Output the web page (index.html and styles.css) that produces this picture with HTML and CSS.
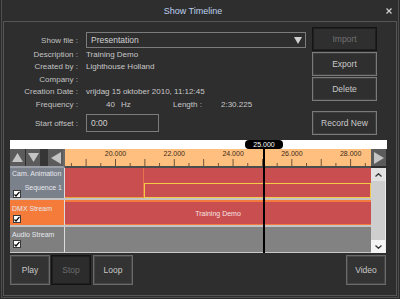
FILE: index.html
```html
<!DOCTYPE html>
<html lang="en">
<head>
    <meta charset="UTF-8">
    <meta name="viewport" content="width=device-width, initial-scale=1.0">
    <title>Show Timeline</title>
    <link rel="stylesheet" href="styles.css">
</head>
<body>
    <div class="window">
        <!-- Title bar -->
        <div class="titlebar">
            <span class="title">Show Timeline</span>
            <svg class="close" width="6" height="6" viewBox="0 0 6 6">
                <path d="M0.5 0.5 L5.5 5.5 M5.5 0.5 L0.5 5.5" stroke="#cfcfcf" stroke-width="1.2"/>
            </svg>
        </div>

        <div class="panel">
            <!-- Show info -->
            <div class="info">
                <div class="fields">
                    <div class="label">Show file :</div>
                    <div class="combo">
                        <span>Presentation</span>
                        <svg class="combo-arrow" width="8" height="7" viewBox="0 0 8 7">
                            <polygon points="0,0 8,0 4,7" fill="#d0d0d0"/>
                        </svg>
                    </div>

                    <div class="label">Description :</div>
                    <div class="value">Training Demo</div>

                    <div class="label">Created by :</div>
                    <div class="value">Lighthouse Holland</div>

                    <div class="label">Company :</div>
                    <div class="value"></div>

                    <div class="label">Creation Date :</div>
                    <div class="value">vrijdag 15 oktober 2010, 11:12:45</div>

                    <div class="label">Frequency :</div>
                    <div class="value freq">
                        <span class="freq-cell"><span class="freq-num">40</span><span class="freq-unit">Hz</span></span>
                        <span class="len-label">Length :</span>
                        <span>2:30.225</span>
                    </div>

                    <div class="label offset-label">Start offset :</div>
                    <div class="offset-input">0:00</div>
                </div>

                <div class="actions">
                    <button class="btn disabled">Import</button>
                    <button class="btn">Export</button>
                    <button class="btn">Delete</button>
                    <button class="btn record">Record New</button>
                </div>
            </div>

            <!-- Timeline -->
            <div class="timeline">
                <div class="strip"></div>

                <div class="ruler-row">
                    <div class="nav">
                        <div class="nav-btn up">
                            <svg width="11" height="9" viewBox="0 0 11 9"><polygon points="5.5,0 11,9 0,9" fill="#c4c4c4"/></svg>
                        </div>
                        <div class="nav-btn down">
                            <svg width="11" height="9" viewBox="0 0 11 9"><polygon points="0,0 11,0 5.5,9" fill="#c4c4c4"/></svg>
                        </div>
                        <div class="nav-gap"></div>
                        <div class="nav-btn left">
                            <svg width="10" height="12" viewBox="0 0 10 12"><polygon points="10,0 10,12 0,6" fill="#c4c4c4"/></svg>
                        </div>
                    </div>
                    <div class="ruler">
                        <span class="tick-label">20.000</span>
                        <span class="tick-label">22.000</span>
                        <span class="tick-label">24.000</span>
                        <span class="tick-label">26.000</span>
                        <span class="tick-label">28.000</span>
                    </div>
                    <div class="nav-btn right">
                        <svg width="10" height="12" viewBox="0 0 10 12"><polygon points="0,0 10,6 0,12" fill="#c4c4c4"/></svg>
                    </div>
                </div>

                <div class="tracks-row">
                    <div class="tracks">
                        <div class="track cam">
                            <div class="head">
                                <div class="head-name">Cam. Animation</div>
                                <div class="head-sub">Sequence 1</div>
                                <span class="check">
                                    <svg width="6" height="6" viewBox="0 0 6 6"><path d="M0.5 3.5 L2 5 L5.5 0.8" stroke="#000" stroke-width="1.2" fill="none"/></svg>
                                </span>
                            </div>
                            <div class="lane cam-lane">
                                <div class="clip-a"></div>
                                <div class="clip-b">
                                    <div class="clip-b-top"></div>
                                    <div class="clip-b-seq"></div>
                                </div>
                            </div>
                        </div>
                        <div class="sep"></div>
                        <div class="track dmx">
                            <div class="head">
                                <div class="head-name">DMX Stream</div>
                                <span class="check">
                                    <svg width="6" height="6" viewBox="0 0 6 6"><path d="M0.5 3.5 L2 5 L5.5 0.8" stroke="#000" stroke-width="1.2" fill="none"/></svg>
                                </span>
                            </div>
                            <div class="lane dmx-lane">Training Demo</div>
                        </div>
                        <div class="sep"></div>
                        <div class="track audio">
                            <div class="head">
                                <div class="head-name">Audio Stream</div>
                                <span class="check">
                                    <svg width="6" height="6" viewBox="0 0 6 6"><path d="M0.5 3.5 L2 5 L5.5 0.8" stroke="#000" stroke-width="1.2" fill="none"/></svg>
                                </span>
                            </div>
                            <div class="lane audio-lane"></div>
                        </div>
                    </div>

                    <div class="scrollbar">
                        <div class="sb-btn sb-up">
                            <svg width="7" height="4" viewBox="0 0 7 4"><path d="M0.5 3.5 L3.5 0.7 L6.5 3.5" stroke="#333" stroke-width="1.2" fill="none"/></svg>
                        </div>
                        <div class="sb-track"></div>
                        <div class="sb-btn sb-down">
                            <svg width="7" height="4" viewBox="0 0 7 4"><path d="M0.5 0.5 L3.5 3.3 L6.5 0.5" stroke="#333" stroke-width="1.2" fill="none"/></svg>
                        </div>
                    </div>
                </div>

                <!-- Playhead -->
                <div class="playhead-tag">25.000</div>
                <div class="playhead"></div>
            </div>

            <!-- Transport -->
            <div class="transport">
                <button class="t-btn">Play</button>
                <button class="t-btn disabled">Stop</button>
                <button class="t-btn loop">Loop</button>
                <button class="t-btn video">Video</button>
            </div>
        </div>
    </div>
</body>
</html>
```

FILE: styles.css
```css
* {
    margin: 0;
    padding: 0;
    box-sizing: border-box;
    font-family: 'Liberation Sans', Arial, sans-serif;
}

body {
    background: #2a2a2a;
    width: 400px;
    height: 299px;
    overflow: hidden;
}

/* Window frame */
.window {
    margin: 0 1px;
    height: 298px;
    border: 1px solid #4e4e4e;
    border-top: none;
    background: #2e2e2e;
    display: flex;
    flex-direction: column;
}

.titlebar {
    height: 21px;
    display: flex;
    align-items: center;
    flex: none;
}

.title {
    flex: 1;
    text-align: center;
    font-size: 9px;
    color: #bccfee;
    padding-top: 1px;
}

.close {
    margin: 0 6px 0 2px;
}

.panel {
    flex: 1;
    margin: 0 1px 1px;
    border: 1px solid #565656;
    display: flex;
    flex-direction: column;
}

/* Info area */
.info {
    height: 118px;
    padding-top: 5px;
    display: flex;
    flex: none;
}

.fields {
    margin-top: 5px;
    display: grid;
    grid-template-columns: 74px 220px;
    grid-template-rows: 16px 12px 13px 12px 13px 12px 22px;
    column-gap: 8px;
    align-items: center;
    align-self: flex-start;
    font-size: 8px;
}

.label {
    text-align: right;
    color: #c2c2c2;
    white-space: nowrap;
}

.value {
    color: #c8c8c8;
    white-space: nowrap;
}

.combo {
    height: 16px;
    border: 1px solid #7c7c7c;
    display: flex;
    align-items: center;
    justify-content: space-between;
    padding: 0 3px 0 4px;
    color: #d0d0d0;
    font-size: 8.5px;
}

.freq {
    display: flex;
}

.freq-cell {
    width: 87px;
}

.freq-num {
    margin-left: 20px;
}

.freq-unit {
    margin-left: 6px;
}

.len-label {
    width: 48px;
}

.offset-label,
.offset-input {
    align-self: end;
    line-height: 16px;
}

.offset-input {
    width: 73px;
    height: 18px;
    border: 1px solid #7c7c7c;
    padding-left: 4px;
    color: #d0d0d0;
    font-size: 8.5px;
}

.actions {
    margin-left: 6px;
    display: flex;
    flex-direction: column;
    gap: 1px;
}

.btn {
    width: 65px;
    height: 24px;
    background: #2f2f2f;
    border: 1px solid #7a7a7a;
    box-shadow: inset 0 0 0 1px #3e3e3e;
    color: #cacaca;
    font-size: 8.5px;
}

.btn.disabled {
    border: 1px solid #151515;
    box-shadow: inset 0 0 0 1px #1f1f1f;
    color: #727272;
}

.btn.record {
    margin-top: 9px;
}

/* Timeline */
.timeline {
    position: relative;
    margin: 0 9px 0 6px;
    height: 113px;
    flex: none;
}

.strip {
    height: 9px;
    background: #ffffff;
}

.ruler-row {
    display: flex;
    height: 19px;
}

.nav {
    width: 55px;
    display: flex;
    height: 19px;
    border-bottom: 2px solid #9a9ea6;
    border-right: 2px solid #6a6a6a;
}

.nav-btn {
    height: 17px;
    background: #5b5b5b;
    display: flex;
    align-items: center;
    justify-content: center;
}

.nav-btn.up {
    width: 15px;
    margin-right: 1px;
}

.nav-btn.down {
    width: 14px;
}

.nav-gap {
    width: 8px;
    background: #363636;
}

.nav-btn.left {
    width: 15px;
}

.nav-btn.right {
    width: 15px;
}

.ruler {
    width: 306px;
    height: 19px;
    background-color: #ffc07f;
    border-bottom: 2px solid #4c4c4c;
    background-image:
        linear-gradient(to right, #6c5236 1px, transparent 1px),
        linear-gradient(to right, #6c5236 1px, transparent 1px);
    background-size: 29.4px 7px, 29.4px 3px;
    background-repeat: repeat-x;
    background-position: 50px 100%, 35.3px 100%;
    display: flex;
    padding-left: 21.1px;
    overflow: hidden;
}

.tick-label {
    flex: none;
    width: 58.8px;
    text-align: center;
    font-size: 7px;
    line-height: 8px;
    padding-top: 1px;
    color: #3a2a18;
}

.tracks-row {
    display: flex;
    height: 85px;
}

.tracks {
    width: 361px;
    display: flex;
    flex-direction: column;
    border-bottom: 1px solid #c8c8c8;
}

.track {
    display: flex;
}

.track.cam {
    height: 30px;
}

.track.dmx,
.track.audio {
    height: 25px;
}

.sep {
    height: 2px;
    background: #c4c4c4;
}

.head {
    width: 55px;
    border-right: 1px solid #dcdcdc;
    font-size: 7px;
    line-height: 9px;
    color: #e6e8ee;
    padding-left: 2px;
}

.cam .head {
    background: #7b818b;
    padding-top: 1px;
}

.dmx .head {
    background: #f47b3a;
    padding-top: 4px;
}

.audio .head {
    background: #7f7f7f;
    padding-top: 3px;
}

.head-sub {
    margin-top: 5px;
    text-align: right;
    padding-right: 2px;
}

.check {
    display: flex;
    align-items: center;
    justify-content: center;
    width: 8px;
    height: 8px;
    margin-left: 1px;
    background: #ffffff;
    border: 1px solid #3a3a3a;
}

.cam .check {
    margin-top: -2px;
}

.dmx .check {
    margin-top: 2px;
}

.audio .check {
    margin-top: 1px;
}

.lane {
    flex: 1;
}

.cam-lane {
    display: flex;
    background: #c94e50;
}

.clip-a {
    width: 79px;
    border-right: 1px solid #e8704c;
    border-bottom: 1px solid #eaa43e;
}

.clip-b {
    flex: 1;
    display: flex;
    flex-direction: column;
}

.clip-b-top {
    height: 15px;
}

.clip-b-seq {
    flex: 1;
    border: 1px solid #f3c948;
}

.dmx-lane {
    background: #c94e50;
    border-top: 2px solid #f27a3c;
    border-bottom: 1px solid #f27a3c;
    color: #f8e2e2;
    font-size: 7px;
    display: flex;
    align-items: center;
    justify-content: center;
    padding-top: 1px;
}

.audio-lane {
    background: #828282;
}

.scrollbar {
    width: 15px;
    display: flex;
    flex-direction: column;
    border-right: 1px solid #ececec;
}

.sb-btn {
    height: 13px;
    display: flex;
    align-items: center;
    justify-content: center;
}

.sb-up {
    background: #e2e2e2;
}

.sb-track {
    flex: 1;
    background: #cecece;
}

.sb-down {
    background: #f4f4f4;
}

.playhead-tag {
    position: absolute;
    top: 0;
    left: 235px;
    width: 38px;
    height: 9px;
    background: #000000;
    border-radius: 4px;
    color: #ffffff;
    font-size: 7px;
    line-height: 9px;
    text-align: center;
}

.playhead {
    position: absolute;
    top: 9px;
    bottom: 0;
    left: 253px;
    width: 2px;
    background: #000000;
}

/* Transport */
.transport {
    margin-top: 2px;
    height: 30px;
    display: flex;
    padding: 0 10px 0 6px;
    flex: none;
}

.t-btn {
    width: 40px;
    height: 30px;
    background: #333333;
    border: 1px solid #6a6a6a;
    box-shadow: inset 0 0 0 1px #464646;
    color: #c8c8c8;
    font-size: 8.5px;
}

.t-btn.disabled {
    margin-left: 1px;
    background: #2c2c2c;
    border: 1px solid #141414;
    box-shadow: inset 0 0 0 1px #1e1e1e;
    color: #6c6c6c;
}

.t-btn.loop {
    margin-left: 2px;
}

.t-btn.video {
    margin-left: auto;
}
```
